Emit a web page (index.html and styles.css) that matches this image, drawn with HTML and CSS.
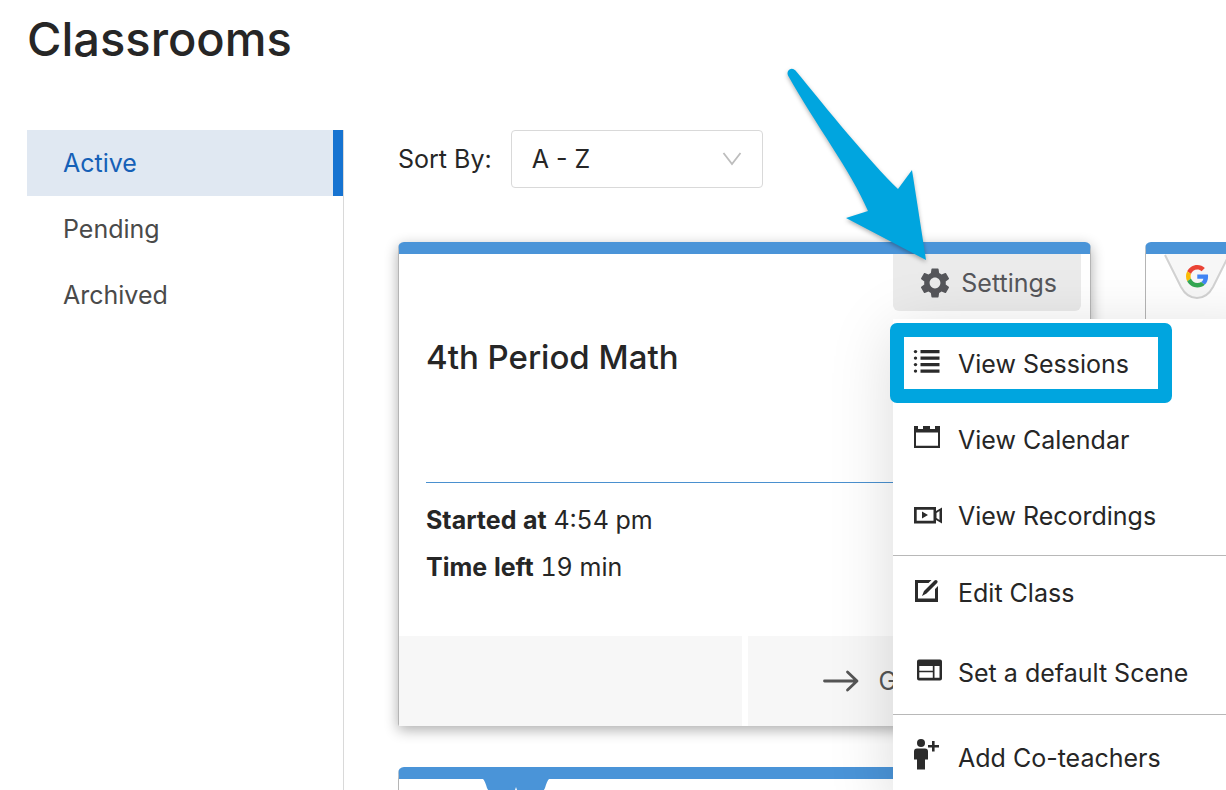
FILE: index.html
```html
<!DOCTYPE html>
<html lang="en">
<head>
<meta charset="utf-8">
<title>Classrooms</title>
<link rel="stylesheet" href="styles.css">
</head>
<body>
<header class="page-header"><h1 class="page-title">Classrooms</h1></header>
<div class="layout">
  <nav class="side-nav" aria-label="Classroom status">
    <a class="side-link side-link-active" href="#active">Active</a>
    <a class="side-link" href="#pending">Pending</a>
    <a class="side-link" href="#archived">Archived</a>
  </nav>
  <main class="content">
    <div class="sort">
      <label for="sort">Sort By:</label>
      <div class="select-wrap">
        <select id="sort" class="select"><option>A - Z</option><option>Z - A</option></select>
        <svg class="chevron" viewBox="0 0 20 14" width="20" height="14" aria-hidden="true"><path d="M1.500 1l8.500 11 8.500-11" fill="none" stroke="#bdbdbd" stroke-width="1.800"/></svg>
      </div>
    </div>
    <div class="cards">
      <article class="card card-raised">
        <div class="card-top">
          <button class="settings" type="button">
            <svg viewBox="2 2 20 20" width="30" height="30" aria-hidden="true"><path fill="#55565a" d="M19.140 12.940c.04-.3.060-.61.060-.94 0-.32-.02-.64-.07-.94l2.030-1.580a.49.490 0 0 0 .12-.61l-1.920-3.320a.488.488 0 0 0-.59-.22l-2.390.96c-.5-.38-1.030-.7-1.620-.94l-.36-2.540a.484.484 0 0 0-.48-.41h-3.840c-.24 0-.43.170-.47.410l-.36 2.540c-.59.240-1.130.570-1.620.940l-2.390-.96c-.22-.08-.47 0-.59.220L2.740 8.870c-.12.210-.08.470.120.610l2.030 1.580c-.05.300-.09.630-.09.940s.02.640.070.940l-2.030 1.580a.49.490 0 0 0-.12.610l1.920 3.320c.12.220.370.290.590.220l2.390-.96c.5.380 1.030.700 1.620.940l.36 2.540c.05.240.240.410.480.410h3.840c.24 0 .44-.17.470-.41l.36-2.540c.59-.24 1.130-.56 1.620-.94l2.390.96c.22.080.470 0 .59-.22l1.920-3.320c.12-.22.070-.47-.12-.61l-2.010-1.580zM12 15.600A3.610 3.610 0 0 1 8.400 12c0-1.980 1.620-3.600 3.600-3.600s3.600 1.620 3.600 3.600-1.620 3.600-3.600 3.600z"/></svg>
            Settings
          </button>
        </div>
        <h2 class="card-title">4th Period Math</h2>
        <div class="card-info">
          <p><strong>Started at</strong> 4:54 pm</p>
          <p><strong>Time left</strong> 19 min</p>
        </div>
        <div class="card-actions">
          <div class="action"></div>
          <button class="action" type="button">
            <svg viewBox="0 0 36 22" width="36" height="22" aria-hidden="true"><path d="M1.500 11h32M24.500 2l9.500 9-9.500 9" fill="none" stroke="#555" stroke-width="2.800" stroke-linecap="round" stroke-linejoin="round"/></svg>
            Go
          </button>
        </div>
        <div class="menu">
          <div class="menu-group">
            <button class="menu-item" type="button">
              <svg class="menu-icon" viewBox="0 0 30 32" aria-hidden="true"><g fill="#2b2b2b"><path d="M7.500 3h19v3.200h-19zM7.500 9.500h19v3.200h-19zM7.500 16h19v3.200h-19zM7.500 22.500h19v3.200h-19z"/><circle cx="2.500" cy="4.600" r="1.700"/><circle cx="2.500" cy="11.100" r="1.700"/><circle cx="2.500" cy="17.600" r="1.700"/><circle cx="2.500" cy="24.100" r="1.700"/></g></svg>
              <span class="menu-label">View Sessions</span>
            </button>
            <button class="menu-item" type="button">
              <svg class="menu-icon" viewBox="0 0 30 32" aria-hidden="true"><path fill="#2b2b2b" fill-rule="evenodd" d="M1 3h4v3h5V3h7v3h5V3h5v22H1zM3 9.500v13.300h22V9.500z"/></svg>
              <span class="menu-label">View Calendar</span>
            </button>
            <button class="menu-item" type="button">
              <svg class="menu-icon" viewBox="0 0 30 32" aria-hidden="true"><path fill="#2b2b2b" fill-rule="evenodd" d="M1 8h22v4l6-3.500v16L23 21v3.500H1zM3.700 10.700v11h16.800v-11zM23.500 14v5l3 2v-9zM9 12.500l6 3.500-6 3.500z"/></svg>
              <span class="menu-label">View Recordings</span>
            </button>
          </div>
          <div class="menu-group">
            <button class="menu-item" type="button">
              <svg class="menu-icon" viewBox="0 0 30 32" aria-hidden="true"><path fill="#2b2b2b" d="M2 4h16.500l-3 3H5v15.500h17V13l3-3v16H2z"/><path fill="#2b2b2b" d="M21.500 4.500q1.400-1.200 2.600 0t0 2.600L13.500 17.500 9 20l2-5z"/></svg>
              <span class="menu-label">Edit Class</span>
            </button>
            <button class="menu-item" type="button">
              <svg class="menu-icon" viewBox="0 0 30 32" aria-hidden="true"><path fill="#2b2b2b" fill-rule="evenodd" d="M6 3.500h21q2 0 2 2v17q0 2-2 2H6q-2 0-2-2v-17q0-2 2-2zM6.300 10v4.700h13.500V10zM6.300 16.200v5.600h13.500v-5.600zM21.500 10v11.800h5V10z"/></svg>
              <span class="menu-label">Set a default Scene</span>
            </button>
          </div>
          <div class="menu-group">
            <button class="menu-item" type="button">
              <svg class="menu-icon" viewBox="0 0 30 32" aria-hidden="true"><g fill="#2b2b2b"><circle cx="8" cy="2" r="4"/><path d="M4 7.500h8q3 0 3 3v8h-3v10H4v-10H1v-8q0-3 3-3zM19 0h2.600v4H26v2.600h-4.400v4H19v-4h-4V4h4z"/></g></svg>
              <span class="menu-label">Add Co-teachers</span>
            </button>
          </div>
        </div>
        <div class="highlight"></div>
        <svg class="pointer" viewBox="0 0 150 204" aria-hidden="true"><path fill="#00a5df" d="M3 9.500Q1.500 5.500 4.500 3.500t6 1C42 43 84 95 113 123L127 104 141 194 61 152 83 145C66 105 30 58 3 9.500z"/></svg>
      </article>
      <article class="card">
        <svg class="badge badge-google" viewBox="0 0 68 46" width="68" height="46" role="img" aria-label="Google">
          <path d="M2 0L18 33Q24 44 34 44T50 33L66 0z" fill="#f7f7f7"/>
          <path d="M2 1L18 33Q24 44 34 44T50 33L66 1" fill="none" stroke="#d2d2d2" stroke-width="2"/>
          <g transform="translate(23 11) scale(.47)"><path fill="#ea4335" d="M24 9.500c3.540 0 6.710 1.220 9.210 3.600l6.850-6.850C35.900 2.380 30.470 0 24 0 14.620 0 6.510 5.380 2.560 13.220l7.980 6.190C12.430 13.720 17.740 9.500 24 9.500z"/><path fill="#4285f4" d="M46.980 24.550c0-1.570-.15-3.090-.38-4.550H24v9.020h12.940c-.58 2.960-2.260 5.480-4.780 7.180l7.730 6c4.510-4.180 7.090-10.360 7.090-17.650z"/><path fill="#fbbc05" d="M10.530 28.590A14.500 14.500 0 0 1 9.770 24c0-1.600.27-3.140.76-4.590l-7.980-6.190A23.900 23.900 0 0 0 0 24c0 3.870.92 7.540 2.560 10.780l7.970-6.190z"/><path fill="#34a853" d="M24 48c6.480 0 11.930-2.130 15.890-5.810l-7.730-6c-2.150 1.450-4.920 2.300-8.160 2.300-6.260 0-11.570-4.220-13.470-9.910l-7.980 6.190C6.510 42.620 14.620 48 24 48z"/></g>
        </svg>
      </article>
      <article class="card">
        <svg class="badge badge-star" viewBox="0 0 68 46" width="68" height="46" aria-hidden="true"><path d="M1 0h66q-2 2-4 9L50 33Q44 44 34 44T18 33L5 9Q3 2 1 0z" fill="#4a94d8"/><path fill="#fff" d="M34 8l3 9h9l-7 6 3 9-8-6-8 6 3-9-7-6h9z"/></svg>
      </article>
    </div>
  </main>
</div>
</body>
</html>
```
FILE: styles.css
```css
* { box-sizing: border-box; }

body {
  margin: 0;
  height: 100vh;
  overflow: hidden;
  display: flex;
  flex-direction: column;
  background: #fff;
  color: #262626;
  font-family: Inter, "Liberation Sans", sans-serif;
  font-size: 25px;
  line-height: 32px;
}

button, select { font: inherit; color: inherit; border: 0; margin: 0; }
h1, h2, p { margin: 0; }
strong { font-weight: 700; }

.page-header { padding: 7px 27px 59px; }
.page-title { font-size: 47px; line-height: 64px; font-weight: 500; }

.layout { flex: 1; min-height: 0; display: flex; gap: 54px; padding-left: 27px; }

.side-nav {
  flex: 0 0 317px;
  display: flex;
  flex-direction: column;
  border-right: 1px solid #d9d9d9;
}
.side-link {
  padding: 17px 36px;
  color: #4a4a4a;
  text-decoration: none;
}
.side-link-active {
  background: #e0e8f2;
  color: #1560b7;
  border-right: 10px solid #1673d1;
}

.content { flex: 1; min-width: 0; }
.sort { display: flex; align-items: center; gap: 19px; margin-bottom: 54px; }
.select-wrap { position: relative; width: 252px; }
.select {
  appearance: none;
  width: 100%;
  height: 58px;
  padding: 0 20px;
  border: 1px solid #d9d9d9;
  border-radius: 4px;
  background: #fff;
}
.chevron { position: absolute; right: 21px; top: 22px; pointer-events: none; }

.cards {
  display: grid;
  grid-template-columns: repeat(2, 693px);
  gap: 41px 54px;
}
.card {
  position: relative;
  min-height: 200px;
  border: 1px solid #b5b5b5;
  border-top: 12px solid #4a94d8;
  border-bottom: 0;
  border-radius: 6px 6px 2px 2px;
  background: #fff;
}
.card-raised { z-index: 1; box-shadow: 0 4px 14px rgba(0, 0, 0, .32); }
.card-top { display: flex; justify-content: flex-end; padding-right: 9px; }
.settings {
  display: flex;
  align-items: center;
  gap: 11px;
  height: 57px;
  padding: 0 24px 0 27px;
  border-radius: 0 0 6px 6px;
  background: #ebebeb;
  color: #55565a;
}
.card-title {
  margin: 0 27px;
  padding: 25px 0 104px;
  border-bottom: 1px solid #4a90cf;
  font-size: 33px;
  line-height: 42px;
  font-weight: 500;
}
.card-info {
  padding: 14px 27px 45px;
  line-height: 47px;
  font-variant-numeric: tabular-nums;
}
.card-actions { display: grid; grid-template-columns: 1fr 1fr; gap: 6px; }
.action {
  display: flex;
  align-items: center;
  gap: 20px;
  height: 90px;
  padding: 0 75px;
  background: #f7f7f7;
  color: #555;
}

.menu {
  position: absolute;
  left: 494px;
  top: 65px;
  width: 380px;
  background: #fff;
  box-shadow: 0 12px 60px rgba(0, 0, 0, .15);
}
.menu-group { display: grid; gap: 8px; padding: 0 0 6px; }
.menu-group:first-child { gap: 4px; padding: 8px 0 4px; }
.menu-group + .menu-group { border-top: 1px solid #b8b8b8; }
.menu-group:last-child { padding-top: 6px; }
.menu-item {
  display: flex;
  align-items: center;
  gap: 15px;
  height: 72px;
  padding: 0 20px;
  background: transparent;
  text-align: left;
}
.menu-icon { flex: none; width: 30px; height: 32px; overflow: visible; }
.menu-label { padding-top: 2px; }

.highlight {
  position: absolute;
  left: 491px;
  top: 69px;
  width: 282px;
  height: 80px;
  border: 14px solid #00a5df;
  border-radius: 7px;
  pointer-events: none;
}
.pointer {
  position: absolute;
  left: 386px;
  top: -188px;
  width: 150px;
  height: 204px;
  filter: drop-shadow(0 2px 2px rgba(0, 0, 0, .3));
  pointer-events: none;
}

.badge { position: absolute; top: 0; }
.badge-google { left: 17px; }
.badge-star { left: 83px; }
```
